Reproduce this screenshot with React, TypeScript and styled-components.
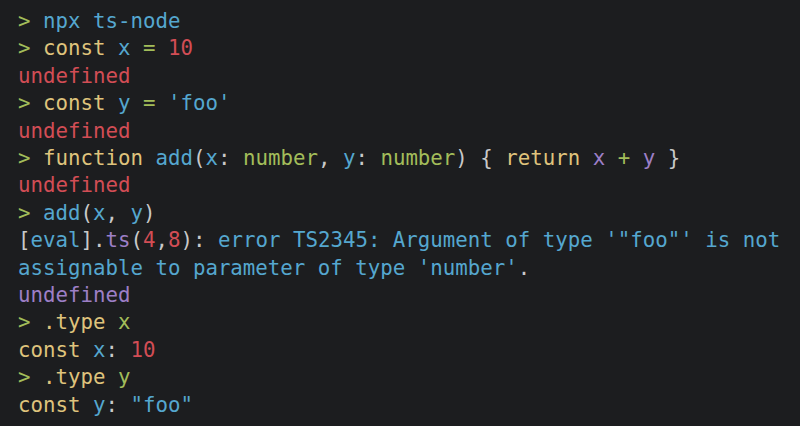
import React from "react";
import styled, { createGlobalStyle } from "styled-components";

const Global = createGlobalStyle`
  html, body { margin: 0; padding: 0; background: #1c1d1f; }
`;

const palette = {
  g: "#a3bd5a",
  b: "#55a7cf",
  y: "#dfc37c",
  r: "#d24d55",
  p: "#9d7fc6",
  w: "#c9c9c9",
} as const;

type C = keyof typeof palette;

const Terminal = styled.div`
  width: 800px;
  height: 426px;
  box-sizing: border-box;
  padding: 8px 0 0 18px;
  background: #1c1d1f;
  font-family: "DejaVu Sans Mono", "Liberation Mono", monospace;
  font-size: 20.75px;
  line-height: 27.4px;
  color: ${palette.w};
  overflow: hidden;
`;

const Line = styled.div`
  white-space: pre;
`;

const Tok = styled.span<{ $c: C }>`
  color: ${(p) => palette[p.$c]};
`;

type Seg = [C, string];

const lines: Seg[][] = [
  [["g", "> "], ["b", "npx ts-node"]],
  [["g", "> "], ["y", "const "], ["b", "x "], ["g", "= "], ["r", "10"]],
  [["r", "undefined"]],
  [["g", "> "], ["y", "const "], ["b", "y "], ["g", "= "], ["b", "'foo'"]],
  [["r", "undefined"]],
  [
    ["g", "> "], ["y", "function "], ["b", "add"], ["w", "("], ["b", "x"], ["w", ": "],
    ["g", "number"], ["w", ", "], ["b", "y"], ["w", ": "], ["g", "number"], ["w", ") { "],
    ["y", "return "], ["p", "x "], ["g", "+ "], ["p", "y "], ["w", "}"],
  ],
  [["r", "undefined"]],
  [["g", "> "], ["b", "add"], ["w", "("], ["b", "x"], ["w", ", "], ["b", "y"], ["w", ")"]],
  [
    ["w", "["], ["b", "eval"], ["w", "]."], ["p", "ts"], ["w", "("], ["r", "4"], ["w", ","],
    ["r", "8"], ["w", "):"], ["b", " error TS2345: Argument of type '\"foo\"' is not"],
  ],
  [["b", "assignable to parameter of type 'number'"], ["w", "."]],
  [["p", "undefined"]],
  [["g", "> "], ["y", ".type "], ["g", "x"]],
  [["y", "const "], ["b", "x"], ["w", ": "], ["r", "10"]],
  [["g", "> "], ["y", ".type "], ["g", "y"]],
  [["y", "const "], ["b", "y"], ["w", ": "], ["b", "\"foo\""]],
];

export default function App() {
  return (
    <>
      <Global />
      <Terminal>
        {lines.map((segs, i) => (
          <Line key={i}>
            {segs.map(([c, t], j) => (
              <Tok key={j} $c={c}>
                {t}
              </Tok>
            ))}
          </Line>
        ))}
      </Terminal>
    </>
  );
}
